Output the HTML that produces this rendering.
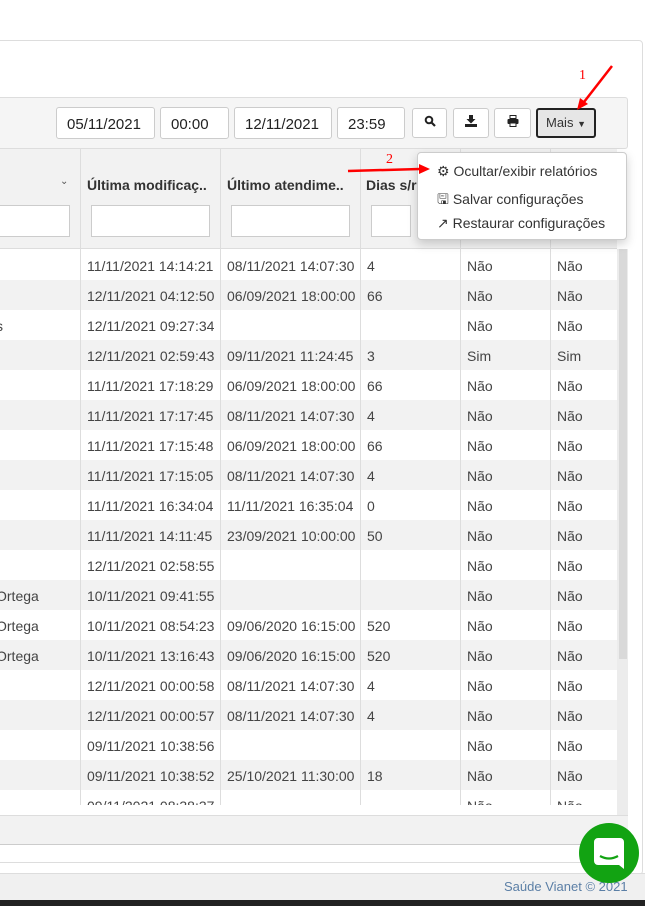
<!DOCTYPE html>
<html><head><meta charset="utf-8"><style>
*{box-sizing:border-box;margin:0;padding:0}
body{width:645px;height:906px;overflow:hidden;background:#fff;font-family:"Liberation Sans",Arial,sans-serif;font-size:14px;color:#333;position:relative}
.abs{position:absolute}
.outer{left:-5px;top:40px;width:648px;height:835px;border:1px solid #ddd;border-radius:4px;background:#fff}
.tool{left:-5px;top:97px;width:633px;height:52px;background:#f5f5f5;border:1px solid #ddd;border-radius:3px}
.inp{top:107px;height:32px;border:1px solid #ccc;border-radius:3px;background:#fff;font-size:15px;color:#222;padding:8px 0 0 10px}
.btn{top:108px;height:30px;border:1px solid #ccc;border-radius:3px;background:#fff;text-align:center;padding-top:6px;font-size:12px}
.tbl{left:-1px;top:149px;width:618px}
.hd{top:149px;height:100px;background:#f2f2f2;border-bottom:1px solid #ddd}
.vl{width:1px;background:#ddd}
.row{left:0;width:617px;height:30px;font-size:14px;color:#444}
.row span{position:absolute;top:8px}
.hin{top:205px;height:32px;border:1px solid #ccc;background:#fff}
.th{top:177px;font-weight:bold;font-size:14px;color:#333}
</style></head><body>
<div class="abs outer"></div>
<div class="abs tool"></div>
<div class="abs inp" style="left:56px;width:99px">05/11/2021</div>
<div class="abs inp" style="left:160px;width:69px">00:00</div>
<div class="abs inp" style="left:234px;width:98px">12/11/2021</div>
<div class="abs inp" style="left:337px;width:68px">23:59</div>
<div class="abs btn" style="left:412px;width:35px"><svg width="12" height="12" viewBox="0 0 12 12"><circle cx="5" cy="5" r="3.3" fill="none" stroke="#222" stroke-width="2"/><path d="M7.5 7.5L11 11" stroke="#222" stroke-width="2.2"/></svg></div>
<div class="abs btn" style="left:453px;width:36px"><svg width="12" height="12" viewBox="0 0 12 12"><path d="M4 0h4v4h2.5L6 8.5 1.5 4H4z" fill="#222"/><rect x="0" y="9" width="12" height="3" fill="#222"/></svg></div>
<div class="abs btn" style="left:494px;width:37px"><svg width="12" height="12" viewBox="0 0 12 12"><rect x="3" y="0.5" width="6" height="3" fill="none" stroke="#222"/><rect x="0.5" y="4" width="11" height="5" rx="1" fill="#222"/><rect x="3" y="8" width="6" height="3.5" fill="#fff" stroke="#222"/></svg></div>
<div class="abs btn" style="left:536px;width:60px;border:2px solid #222;background:#e6e6e6;color:#333;padding-top:5px;font-size:13px">Mais <span style="font-size:9px">▼</span></div>

<div class="abs hd" style="left:0;width:617px"></div>
<div class="abs th" style="left:87px">Última modificaç..</div>
<div class="abs th" style="left:227px">Último atendime..</div>
<div class="abs th" style="left:366px">Dias s/r</div>
<div class="abs" style="left:60px;top:176px;font-size:10px;color:#555">⌄</div>
<div class="abs hin" style="left:-5px;width:75px"></div>
<div class="abs hin" style="left:91px;width:119px"></div>
<div class="abs hin" style="left:231px;width:119px"></div>
<div class="abs hin" style="left:371px;width:40px"></div>

<div id="rows"></div>
<div class="abs" style="left:617px;top:249px;width:11px;height:566px;background:#ececec"></div>
<div class="abs" style="left:619px;top:249px;width:8px;height:410px;background:#d9d9d9"></div>
<div class="abs" style="left:0;top:805px;width:617px;height:11px;background:#fff"></div>
<div class="abs" style="left:0;top:815px;width:628px;height:30px;background:#f2f2f2;border-top:1px solid #ddd;border-bottom:1px solid #ccc"></div>
<div class="abs" style="left:0;top:862px;width:628px;height:1px;background:#ddd"></div>
<div class="abs" style="left:0;top:873px;width:645px;height:27px;background:#f0f0f0;border-top:1px solid #ddd"></div>
<div class="abs" style="left:504px;top:879px;font-size:13px;color:#5b7fa6">Saúde Vianet © 2021</div>
<div class="abs" style="left:0;top:900px;width:645px;height:6px;background:#222"></div>

<div class="abs" style="left:579px;top:823px;width:60px;height:60px;border-radius:50%;background:#12a312"></div>
<svg class="abs" style="left:594px;top:838px" width="30" height="32" viewBox="0 0 30 32"><path d="M4 0h22a4 4 0 0 1 4 4v27l-5-4H4a4 4 0 0 1-4-4V4a4 4 0 0 1 4-4z" fill="#fff"/><path d="M6 18q9 5 18 0" stroke="#12a312" stroke-width="2.2" fill="none"/></svg>

<div class="abs" style="left:417px;top:152px;width:210px;height:88px;background:#fff;border:1px solid #ccc;border-radius:4px;box-shadow:0 4px 10px rgba(0,0,0,.18);font-size:14px;color:#333">
<div style="position:absolute;left:19px;top:10px">⚙ Ocultar/exibir relatórios</div>
<div style="position:absolute;left:19px;top:36px">🖫 Salvar configurações</div>
<div style="position:absolute;left:19px;top:62px">↗ Restaurar configurações</div>
</div>

<svg class="abs" style="left:0;top:0" width="645" height="906">
<text x="579" y="79" fill="red" font-family="Liberation Serif" font-size="14">1</text>
<path d="M612 66L584 102" stroke="red" stroke-width="2.5"/><path d="M577 110l3-12 8 6z" fill="red"/>
<text x="386" y="163" fill="red" font-family="Liberation Serif" font-size="14">2</text>
<path d="M348 171L420 169" stroke="red" stroke-width="2.5"/><path d="M430 169l-11-5v10z" fill="red"/>
</svg>

<script>
var d=[["","11/11/2021 14:14:21","08/11/2021 14:07:30","4","Não","Não"],["","12/11/2021 04:12:50","06/09/2021 18:00:00","66","Não","Não"],["s","12/11/2021 09:27:34","","","Não","Não"],["","12/11/2021 02:59:43","09/11/2021 11:24:45","3","Sim","Sim"],["","11/11/2021 17:18:29","06/09/2021 18:00:00","66","Não","Não"],["","11/11/2021 17:17:45","08/11/2021 14:07:30","4","Não","Não"],["","11/11/2021 17:15:48","06/09/2021 18:00:00","66","Não","Não"],["","11/11/2021 17:15:05","08/11/2021 14:07:30","4","Não","Não"],["","11/11/2021 16:34:04","11/11/2021 16:35:04","0","Não","Não"],["","11/11/2021 14:11:45","23/09/2021 10:00:00","50","Não","Não"],["","12/11/2021 02:58:55","","","Não","Não"],["Ortega","10/11/2021 09:41:55","","","Não","Não"],["Ortega","10/11/2021 08:54:23","09/06/2020 16:15:00","520","Não","Não"],["Ortega","10/11/2021 13:16:43","09/06/2020 16:15:00","520","Não","Não"],["","12/11/2021 00:00:58","08/11/2021 14:07:30","4","Não","Não"],["","12/11/2021 00:00:57","08/11/2021 14:07:30","4","Não","Não"],["","09/11/2021 10:38:56","","","Não","Não"],["","09/11/2021 10:38:52","25/10/2021 11:30:00","18","Não","Não"],["","09/11/2021 08:38:37","","","Não","Não"]];
var x=[-5,87,227,367,467,557],h="";
d.forEach(function(r,i){var t=250+i*30;h+='<div class="abs row" style="top:'+t+'px;background:'+(i%2?'#f2f2f2':'#fff')+'">';r.forEach(function(c,j){h+='<span style="left:'+(j==0?-4:x[j])+'px">'+c+'</span>'});h+='</div>'});
[80,220,360,460,550].forEach(function(v){h+='<div class="abs vl" style="left:'+v+'px;top:149px;height:696px"></div>'});
document.getElementById('rows').innerHTML=h;
</script>
</body></html>
